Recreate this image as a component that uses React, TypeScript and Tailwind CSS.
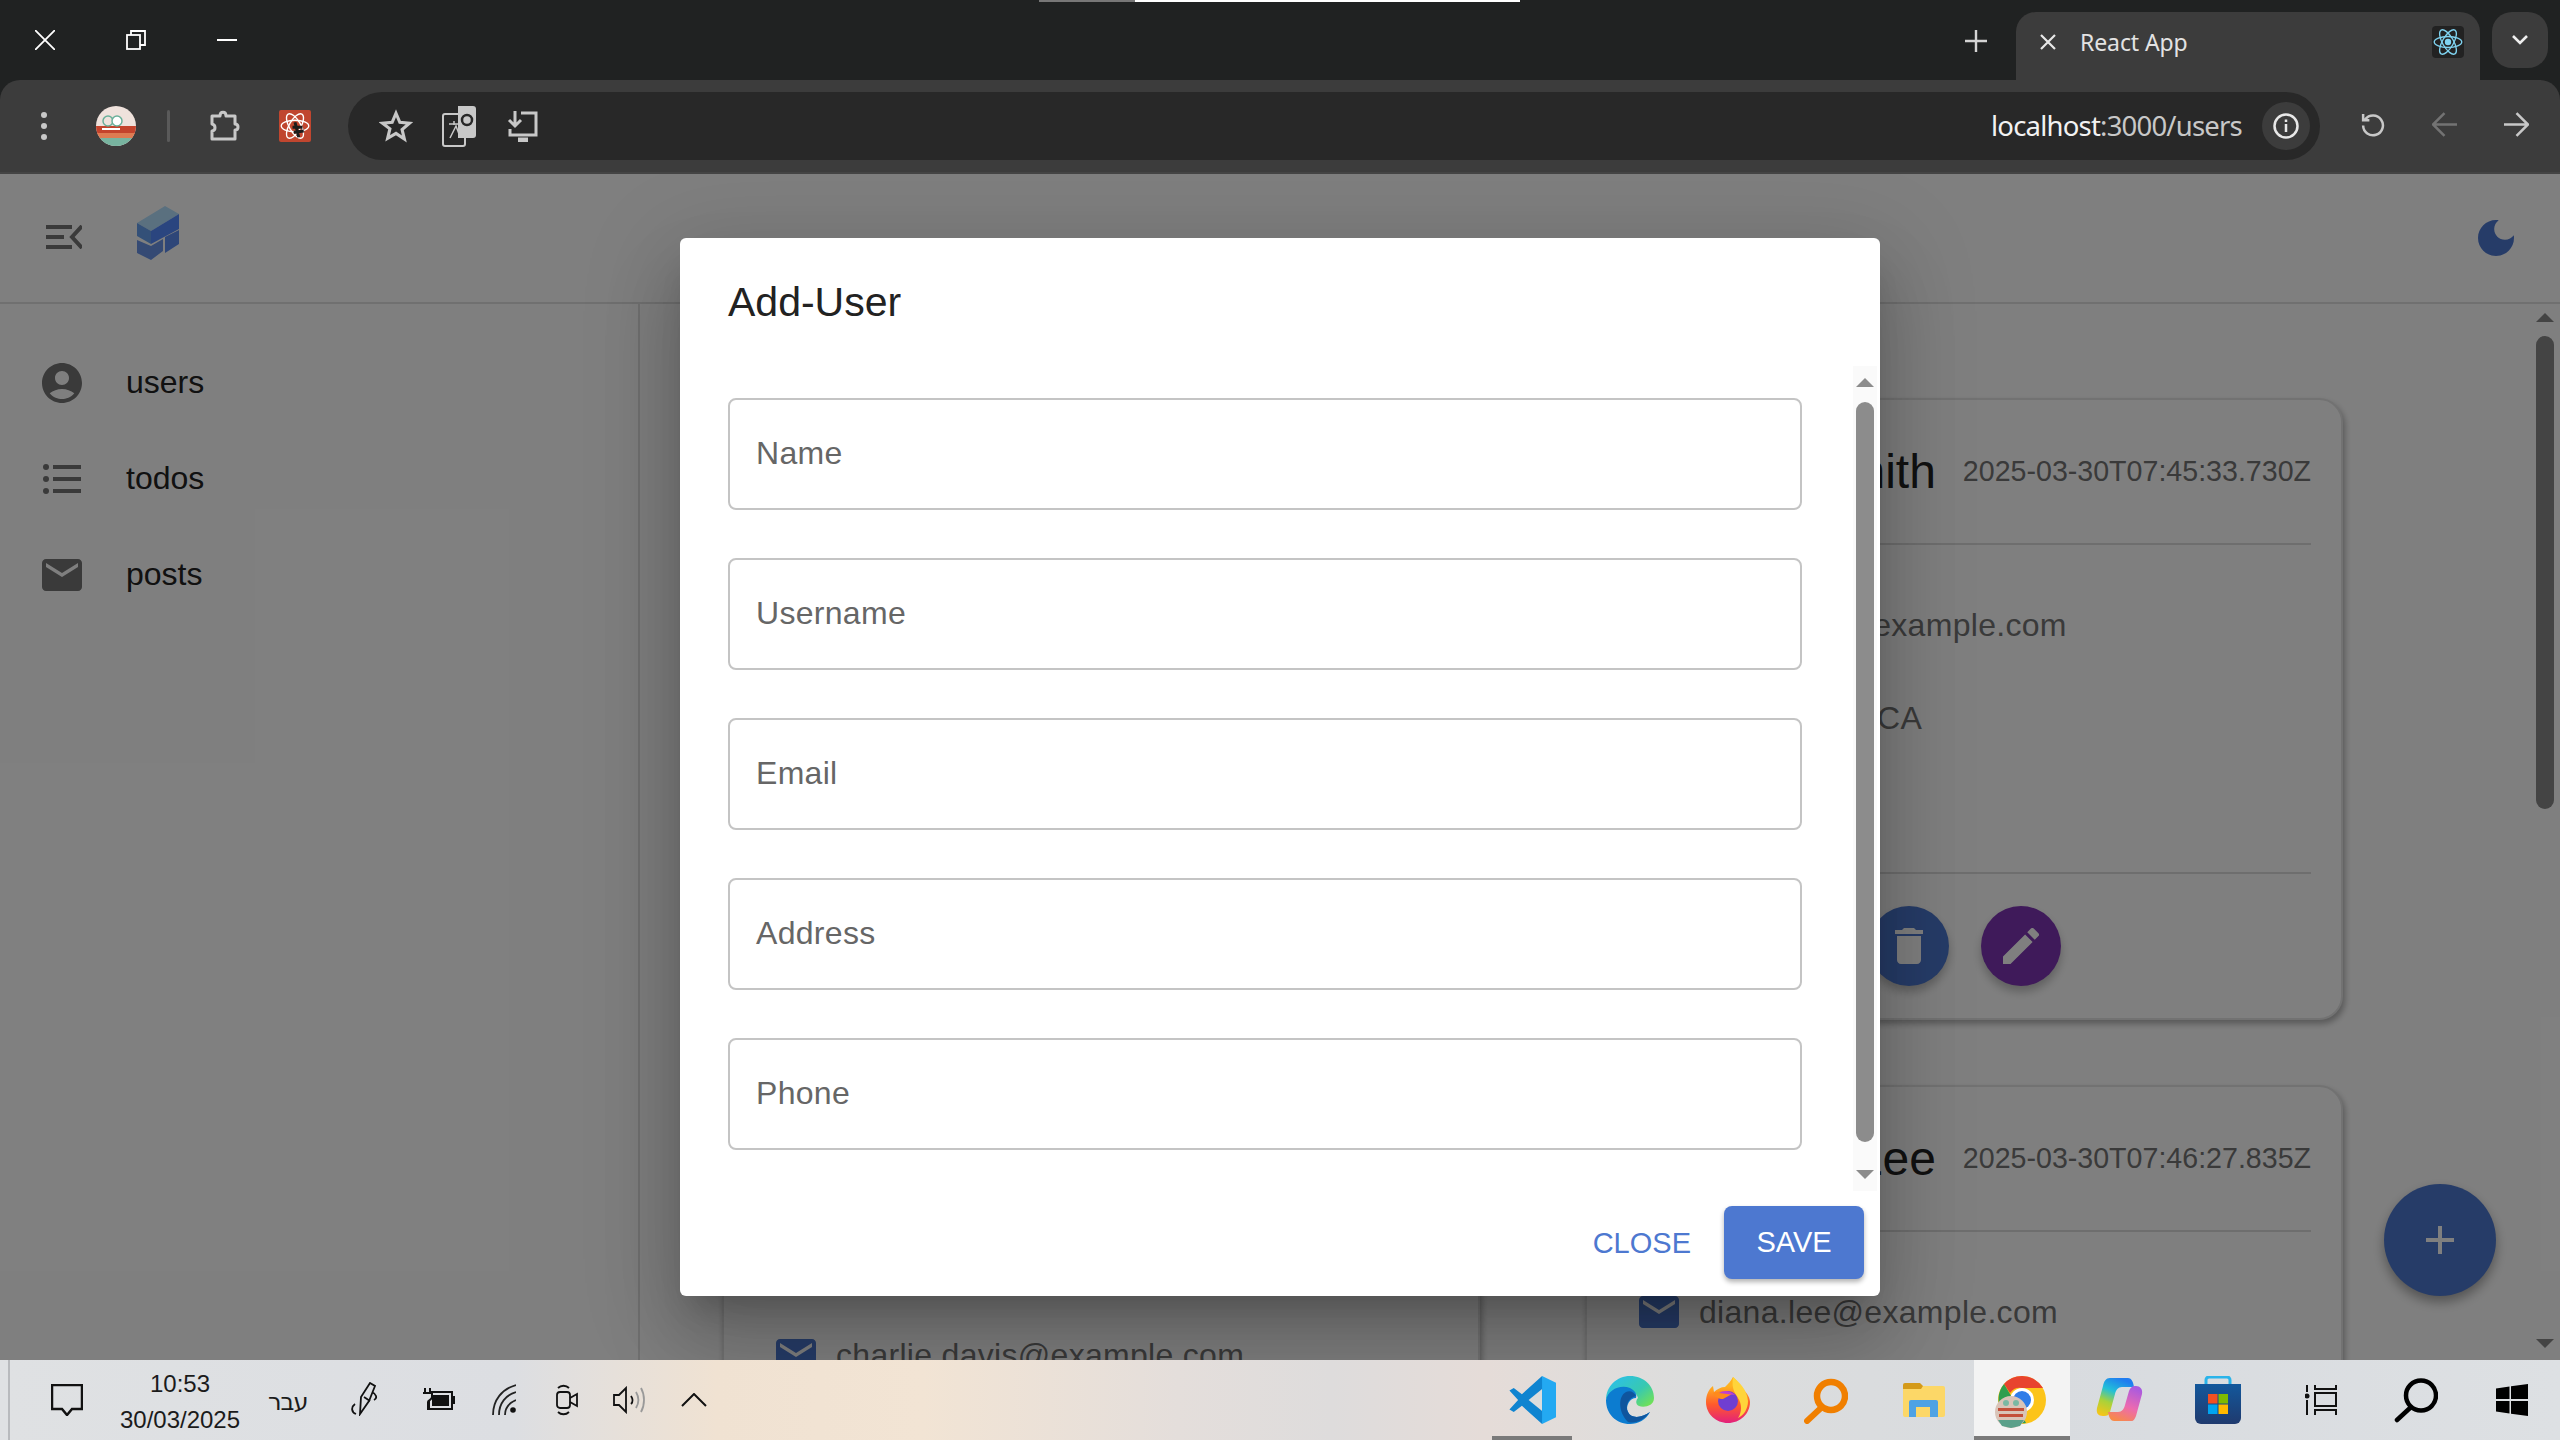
import { Fragment } from "react";

const font = "font-['Liberation_Sans',Arial,sans-serif]";

const fields = ["Name", "Username", "Email", "Address", "Phone"];

const MailIcon = ({ className }: { className: string }) => (
  <svg viewBox="2 4 20 16" className={className} fill="currentColor" preserveAspectRatio="none">
    <path d="M20 4H4c-1.100 0-2 .9-2 2v12c0 1.100.9 2 2 2h16c1.100 0 2-.9 2-2V6c0-1.100-.9-2-2-2zm0 4l-8 5-8-5V6l8 5 8-5v2z" />
  </svg>
);

const TabBar = () => (
  <div className="h-[80px] shrink-0 bg-[#202222] relative flex items-center text-white">
    <div className="absolute top-0 left-[1039px] h-[2px] w-[481px] flex">
      <div className="w-[96px] bg-[#777]" />
      <div className="flex-1 bg-white" />
    </div>
    <svg viewBox="0 0 20 20" className="w-[20px] h-[20px] ml-[35px] mr-[71px]" stroke="#fff" strokeWidth="1.8" fill="none">
      <path d="M0 0L20 20M20 0L0 20" />
    </svg>
    <svg viewBox="0 0 20 20" className="w-[20px] h-[20px] mr-[71px]" stroke="#fff" strokeWidth="1.8" fill="none">
      <rect x="1" y="5" width="13" height="14" />
      <path d="M5 5V1h14v14h-5" />
    </svg>
    <div className="w-[20px] h-[2px] bg-white" />
    <svg viewBox="0 0 20 20" className="w-[22px] h-[22px] ml-auto mr-[29px] mt-[1px]" stroke="#d4d4d4" strokeWidth="2.2" fill="none">
      <path d="M10 0V20M0 10H20" />
    </svg>
    <div className="w-[464px] h-[68px] self-end bg-[#3c3c3c] rounded-t-[20px] flex items-center pl-[24px] pr-[16px] mr-[12px]">
      <svg viewBox="0 0 16 16" className="w-[16px] h-[16px] mb-[8px]" stroke="#e8e8e8" strokeWidth="2.2" fill="none">
        <path d="M1 1L15 15M15 1L1 15" />
      </svg>
      <span className="ml-[24px] mb-[8px] text-[#e3e3e3] text-[23px] font-['Noto_Sans',sans-serif] tracking-[-0.1px]">React App</span>
      <div className="ml-auto mb-[8px] w-[32px] h-[32px] rounded-[4px] bg-[#222] flex items-center justify-center">
        <svg viewBox="-12 -12 24 24" className="w-[30px] h-[30px]" stroke="#7fd3f0" strokeWidth="1.1" fill="none">
          <circle r="2" fill="#7fd3f0" />
          <ellipse rx="11" ry="4.4" />
          <ellipse rx="11" ry="4.4" transform="rotate(60)" />
          <ellipse rx="11" ry="4.4" transform="rotate(120)" />
        </svg>
      </div>
    </div>
    <div className="w-[56px] h-[56px] mr-[12px] self-start mt-[12px] rounded-[20px] bg-[#3c3c3c] flex items-center justify-center">
      <svg viewBox="0 0 16 10" className="w-[16px] h-[10px]" stroke="#eee" strokeWidth="2.6" fill="none">
        <path d="M1 1L8 8L15 1" />
      </svg>
    </div>
  </div>
);

const Toolbar = () => (
  <div className="h-[94px] shrink-0 bg-[#3c3c3c] rounded-t-[20px] border-b-2 border-[#444] flex items-center relative">
    <div className="w-[6px] ml-[41px] flex flex-col gap-[5px]">
      <div className="w-[6px] h-[6px] rounded-full bg-[#c8c8c8]" />
      <div className="w-[6px] h-[6px] rounded-full bg-[#c8c8c8]" />
      <div className="w-[6px] h-[6px] rounded-full bg-[#c8c8c8]" />
    </div>
    <svg viewBox="0 0 40 40" className="w-[40px] h-[40px] ml-[49px]">
      <clipPath id="av"><circle cx="20" cy="20" r="20" /></clipPath>
      <g clipPath="url(#av)">
        <rect width="40" height="40" fill="#efe2dc" />
        <rect y="20" width="40" height="8" fill="#c4432c" />
        <rect y="27" width="40" height="6" fill="#de7b52" />
        <rect y="32" width="40" height="8" fill="#78b4a0" />
        <circle cx="12" cy="15" r="5" fill="none" stroke="#6ab09a" strokeWidth="1.5" />
        <circle cx="21" cy="15" r="5" fill="#fff" stroke="#6ab09a" strokeWidth="1.5" />
        <rect x="6" y="22" width="18" height="2" fill="#fff" />
      </g>
    </svg>
    <div className="w-[3px] h-[32px] ml-[31px] rounded bg-[#5a5a5a]" />
    <svg viewBox="0 0 32 32" className="w-[32px] h-[32px] ml-[39px]" stroke="#c8c8c8" strokeWidth="3" fill="none" strokeLinejoin="round">
      <path d="M3 6h8c0-5 6-5 6 0h9v8c4 0 4 6 0 6v9H3v-8c4-.5 4-6 0-7z" />
    </svg>
    <div className="w-[32px] h-[32px] ml-[38px] rounded-[2px] bg-[#c0462f] flex items-center justify-center">
      <svg viewBox="-12 -12 24 24" className="w-[30px] h-[30px]" stroke="#fff" strokeWidth="1.1" fill="none">
        <ellipse rx="11" ry="4.6" />
        <ellipse rx="11" ry="4.6" transform="rotate(60)" />
        <ellipse rx="11" ry="4.6" transform="rotate(120)" />
        <path d="M0-3L3 9M-2 1L6 1M-1 5L7 4" stroke="#1b1b1b" strokeWidth="2.4" />
      </svg>
    </div>
    <div className="absolute left-[348px] top-[12px] w-[1972px] h-[68px] rounded-full bg-[#282828] flex items-center">
      <svg viewBox="0 0 24 24" className="w-[34px] h-[34px] ml-[31px]" stroke="#c8c8c8" strokeWidth="2.2" fill="none" strokeLinejoin="miter">
        <path d="M12 3l2.700 6.400 6.800.6-5.200 4.500 1.600 6.700L12 17.200l-5.900 3.500 1.600-6.700L2.500 10l6.800-.6z" />
      </svg>
      <svg viewBox="0 0 34 44" className="w-[34px] h-[44px] ml-[29px]">
        <rect x="1" y="10" width="22" height="32" rx="2" fill="none" stroke="#c8c8c8" strokeWidth="2" />
        <path d="M16 2h15a3 3 0 0 1 3 3v26a3 3 0 0 1-3 3H16z" fill="#c8c8c8" />
        <circle cx="25" cy="16" r="5" fill="none" stroke="#282828" strokeWidth="2.5" />
        <path d="M7 20h11M12 17v4M8 34l6-12 3 8" fill="none" stroke="#c8c8c8" strokeWidth="1.5" />
      </svg>
      <svg viewBox="0 0 32 32" className="w-[32px] h-[32px] ml-[31px]" stroke="#c8c8c8" strokeWidth="3" fill="none">
        <path d="M14 3h15v22H3v-6" />
        <path d="M8 1v13M2 10l6 6 6-6" />
        <path d="M11 30h10" strokeWidth="5" />
      </svg>
      <div className="ml-auto mr-[10px] flex items-center gap-[20px]">
        <span className="text-[#f2f2f2] text-[27.5px] tracking-[-0.8px] font-['Noto_Sans',sans-serif]">
          localhost<span className="text-[#c8c8c8]">:3000/users</span>
        </span>
        <div className="w-[48px] h-[48px] rounded-full bg-[#3c3c3c] flex items-center justify-center">
          <svg viewBox="0 0 26 26" className="w-[26px] h-[26px]" stroke="#e8e8e8" strokeWidth="2.5" fill="none">
            <circle cx="13" cy="13" r="11.5" />
            <path d="M13 11v8M13 6.500v2.500" />
          </svg>
        </div>
      </div>
    </div>
    <svg viewBox="0 0 24 24" className="absolute left-[2360px] top-[32px] w-[25px] h-[25px]" stroke="#c8c8c8" strokeWidth="2.4" fill="none">
      <path d="M5 7a9.500 9.500 0 1 1-2 6M3 2v6h6" />
    </svg>
    <svg viewBox="0 0 24 24" className="absolute left-[2432px] top-[32px] w-[25px] h-[25px]" stroke="#737373" strokeWidth="2.4" fill="none">
      <path d="M24 12H2M12 1L1 12l11 11" />
    </svg>
    <svg viewBox="0 0 24 24" className="absolute left-[2504px] top-[32px] w-[25px] h-[25px]" stroke="#c8c8c8" strokeWidth="2.4" fill="none">
      <path d="M0 12h22M12 1l11 11-11 11" />
    </svg>
  </div>
);

const Sidebar = () => (
  <aside className="w-[640px] shrink-0 border-r-2 border-[#e0e0e0] pt-[31px] text-[#222]">
    {["users", "todos", "posts"].map((label) => (
      <div key={label} className="h-[96px] flex items-center pl-[42px]">
        <div className="w-[40px] h-[40px] flex items-center justify-center text-[#757575]">
          {label === "users" && (
            <svg viewBox="2 2 20 20" className="w-[40px] h-[40px]" fill="currentColor">
              <path d="M12 2C6.480 2 2 6.480 2 12s4.480 10 10 10 10-4.480 10-10S17.520 2 12 2zm0 4c1.930 0 3.500 1.570 3.500 3.500S13.930 13 12 13s-3.500-1.570-3.500-3.500S10.070 6 12 6zm0 14c-2.030 0-4.430-.820-6.140-2.880C7.550 15.800 9.680 15 12 15s4.450.8 6.140 2.120C16.430 19.180 14.030 20 12 20z" />
            </svg>
          )}
          {label === "todos" && (
            <svg viewBox="0 0 38 30" className="w-[38px] h-[30px]" fill="currentColor">
              <circle cx="3" cy="3" r="3" />
              <circle cx="3" cy="15" r="3" />
              <circle cx="3" cy="27" r="3" />
              <rect x="10" y="1" width="28" height="4" />
              <rect x="10" y="13" width="28" height="4" />
              <rect x="10" y="25" width="28" height="4" />
            </svg>
          )}
          {label === "posts" && <MailIcon className="w-[40px] h-[32px]" />}
        </div>
        <span className="ml-[44px] mb-[3px] text-[32px]">{label}</span>
      </div>
    ))}
  </aside>
);

const Fab = ({ color, children }: { color: string; children: React.ReactNode }) => (
  <div className={`w-[80px] h-[80px] rounded-full ${color} text-white flex items-center justify-center shadow-[0_6px_10px_rgba(0,0,0,0.25)]`}>
    {children}
  </div>
);

const Card = ({ name, date, email, city }: { name: string; date: string; email: string; city: string }) => (
  <div className="h-[622px] rounded-[24px] bg-white border-2 border-[#e4e4e4] shadow-[2px_4px_6px_rgba(0,0,0,0.3)] px-[30px] flex flex-col shrink-0">
    <div className="h-[145px] shrink-0 flex items-center justify-end gap-[27px] border-b-2 border-[#dcdcdc]">
      <span className="text-[48px] text-[#222] whitespace-nowrap">{name}</span>
      <span className="text-[28.6px] text-[#757575] whitespace-nowrap">{date}</span>
    </div>
    <div className="h-[329px] shrink-0 border-b-2 border-[#dcdcdc] pt-[40px] text-[32px] tracking-[0.3px] text-[#757575]">
      <div className="flex items-center h-[80px]">
        <MailIcon className="w-[40px] h-[32px] ml-[22px] text-[#4d78d0]" />
        <span className="ml-[20px]">{email}</span>
      </div>
      <div className="flex items-center h-[106px] pl-[64px]">{city}</div>
    </div>
    <div className="flex gap-[32px] pt-[32px] pl-[252px]">
      <Fab color="bg-[#4d78d0]">
        <svg viewBox="5 3 14 18" className="w-[28px] h-[36px]" fill="currentColor">
          <path d="M6 19c0 1.100.9 2 2 2h8c1.100 0 2-.9 2-2V7H6v12zM19 4h-3.500l-1-1h-5l-1 1H5v2h14V4z" />
        </svg>
      </Fab>
      <Fab color="bg-[#7e35b4]">
        <svg viewBox="3 3 18 18" className="w-[36px] h-[36px]" fill="currentColor">
          <path d="M3 17.250V21h3.750L17.810 9.940l-3.750-3.750L3 17.250zM20.710 7.040a1 1 0 0 0 0-1.410l-2.340-2.340a1 1 0 0 0-1.410 0l-1.830 1.830 3.750 3.750 1.830-1.830z" />
        </svg>
      </Fab>
    </div>
  </div>
);

const Dialog = () => (
  <div className={`w-[1200px] h-[1058px] bg-white rounded-[6px] shadow-[0_22px_30px_-14px_rgba(0,0,0,0.2),0_48px_76px_6px_rgba(0,0,0,0.14),0_18px_92px_16px_rgba(0,0,0,0.12)] flex flex-col ${font}`}>
    <h2 className="h-[128px] shrink-0 pl-[48px] pt-[32px] text-[41px] leading-[64px] text-[#222]">Add-User</h2>
    <div className="flex-1 flex relative pl-[48px]">
      <div className="w-[1074px] pt-[32px] flex flex-col gap-[48px]">
        {fields.map((field) => (
          <div key={field} className="h-[112px] rounded-[8px] border-2 border-[#c4c4c4] flex items-center pl-[26px] pb-[2px] text-[32px] tracking-[0.3px] text-[#666]">
            {field}
          </div>
        ))}
      </div>
      <div className="absolute left-[1173px] top-0 w-[24px] h-[825px] bg-[#fafafa] flex flex-col items-center">
        <div className="mt-[12px] border-x-[9px] border-x-transparent border-b-[9px] border-b-[#8c8c8c]" />
        <div className="mt-[15px] w-[18px] h-[740px] rounded-full bg-[#8c8c8c]" />
        <div className="mt-[28px] border-x-[9px] border-x-transparent border-t-[9px] border-t-[#8c8c8c]" />
      </div>
    </div>
    <div className="h-[106px] shrink-0 flex items-start justify-end pr-[16px] pt-[16px]">
      <span className="mt-[20px] mr-[33px] text-[#4d78d0] text-[29px] leading-[34px]">CLOSE</span>
      <div className="w-[140px] h-[73px] rounded-[8px] bg-[#4d78d0] text-white text-[29px] flex items-center justify-center shadow-[0_3px_5px_rgba(0,0,0,0.3)]">SAVE</div>
    </div>
  </div>
);

const AppArea = () => (
  <div className={`flex-1 relative bg-white overflow-hidden flex flex-col ${font}`}>
    <header className="h-[130px] shrink-0 border-b-2 border-[#e0e0e0] flex items-center pl-[46px] pr-[46px]">
      <svg viewBox="0 0 36 24" className="w-[36px] h-[24px] mb-[2px]" fill="#757575">
        <rect width="26" height="4" />
        <rect y="10" width="18" height="4" />
        <rect y="20" width="26" height="4" />
        <path d="M36 1L26 12l10 11" fill="none" stroke="#757575" strokeWidth="4" />
      </svg>
      <svg viewBox="0 0 42 54" className="w-[42px] h-[54px] ml-[55px] mb-[10px]">
        <path d="M28 0L42 8 14 25 0 17z" fill="#b4e0ff" />
        <path d="M14 25L42 8v15L14 38z" fill="#548aff" />
        <path d="M0 17l14 8v13L0 30z" fill="#66a0f0" />
        <path d="M0 34l14 6 12-7v12L14 54 0 47z" fill="#6a94e8" />
        <path d="M28 31l14-7v14l-14 9z" fill="#5c8cf0" />
      </svg>
      <svg viewBox="3 3 18 18" className="w-[36px] h-[36px] ml-auto" fill="#4d78d0">
        <path d="M12 3c-4.970 0-9 4.030-9 9s4.030 9 9 9 9-4.030 9-9c0-.46-.04-.92-.1-1.360-.98 1.370-2.580 2.260-4.400 2.260-2.980 0-5.400-2.420-5.400-5.400 0-1.810.89-3.420 2.260-4.400-.44-.06-.9-.1-1.360-.1z" />
      </svg>
    </header>
    <div className="flex-1 flex min-h-0">
      <Sidebar />
      <main className="flex-1 flex gap-[105px] pl-[82px] pt-[94px] min-w-0">
        <div className="w-[758px] shrink-0 flex flex-col gap-[64px]">
          <Card name="Alice Johnson" date="2025-03-30T07:44:12.514Z" email="alice.johnson@example.com" city="New York, NY" />
          <div className="h-[622px] rounded-[24px] bg-white border-2 border-[#e4e4e4] shadow-[2px_4px_6px_rgba(0,0,0,0.3)] px-[30px] flex flex-col shrink-0">
            <div className="h-[144px] shrink-0 border-b-2 border-[#dcdcdc]" />
            <div className="pt-[101px] flex items-center text-[32px] tracking-[0.3px] text-[#757575]">
              <MailIcon className="w-[40px] h-[32px] ml-[22px] text-[#4d78d0]" />
              <span className="ml-[20px]">charlie.davis@example.com</span>
            </div>
          </div>
        </div>
        <div className="w-[758px] shrink-0 flex flex-col gap-[65px]">
          <Card name="Bob Smith" date="2025-03-30T07:45:33.730Z" email="bob.smith@example.com" city="Los Angeles, CA" />
          <Card name="Diana Lee" date="2025-03-30T07:46:27.835Z" email="diana.lee@example.com" city="Seattle, WA" />
        </div>
      </main>
    </div>
    <div className="absolute right-[64px] bottom-[64px] w-[112px] h-[112px] rounded-full bg-[#4d78d0] shadow-[0_6px_12px_rgba(0,0,0,0.35)] flex items-center justify-center">
      <svg viewBox="0 0 28 28" className="w-[28px] h-[28px]" stroke="#fff" strokeWidth="4" fill="none">
        <path d="M14 0V28M0 14H28" />
      </svg>
    </div>
    <div className="absolute right-0 top-[130px] bottom-0 w-[30px] bg-white flex flex-col items-center">
      <div className="mt-[9px] border-x-[9px] border-x-transparent border-b-[9px] border-b-[#888]" />
      <div className="mt-[14px] w-[18px] h-[473px] rounded-full bg-[#888]" />
      <div className="mt-auto mb-[12px] border-x-[9px] border-x-transparent border-t-[9px] border-t-[#888]" />
    </div>
    <div className="absolute inset-0 bg-black/50 flex items-center justify-center">
      <Dialog />
    </div>
  </div>
);

const Taskbar = () => (
  <footer className={`h-[80px] shrink-0 flex items-center relative text-[#1b1b1b] bg-[linear-gradient(90deg,#dfe1e3_0%,#dcdee2_20%,#f0e2d2_28%,#f2e4d4_36%,#e4dedb_46%,#dedcdc_52%,#e5dcd8_58%,#dcdddd_66%,#d8dbdf_80%,#dde0e3_100%)] ${font}`}>
    <div className="absolute left-[8px] top-0 bottom-0 w-[2px] bg-[#b8babd]" />
    <svg viewBox="0 0 32 32" className="absolute left-[51px] top-[24px] w-[32px] h-[32px]" stroke="#111" strokeWidth="2.5" fill="none">
      <path d="M1 1h30v24H21l-5 6-5-6H1z" />
    </svg>
    <div className="absolute left-[118px] top-[6px] w-[124px] flex flex-col items-center text-[24px] leading-[36px]">
      <span>10:53</span>
      <span>30/03/2025</span>
    </div>
    <span dir="rtl" className="absolute left-[268px] top-[24px] text-[24px] font-['DejaVu_Sans',sans-serif] tracking-[-1px]">עבר</span>
    <svg viewBox="0 0 32 34" className="absolute left-[350px] top-[22px] w-[32px] h-[34px]" stroke="#111" strokeWidth="1.8" fill="none">
      <path d="M10 32L11 15 20 1l5 3-6 15zM22 10c4 2 6 6 2 8M5 22c-4 3-4 8 1 10" />
      <path d="M14 15l6 4" />
    </svg>
    <svg viewBox="0 0 33 22" className="absolute left-[422px] top-[28px] w-[33px] h-[22px]" stroke="#111" strokeWidth="2" fill="none">
      <path d="M7 4h23v17H7V12" />
      <rect x="10" y="7" width="17" height="11" fill="#111" stroke="none" />
      <path d="M32 8v8" />
      <path d="M3 0v5M8 0v5" />
      <path d="M1 5h9v4c0 3-4 3-4 5v8" fill="#dfe1e3" />
    </svg>
    <svg viewBox="0 0 24 32" className="absolute left-[492px] top-[24px] w-[24px] h-[32px]" stroke="#222" strokeWidth="1.8" fill="none">
      <path d="M1 31C1 16 10 5 24 1M7 31C7 19 14 11 24 8M13 31c0-7 4-12 11-15" />
      <circle cx="21" cy="26" r="2.8" fill="#111" stroke="none" />
    </svg>
    <svg viewBox="0 0 22 32" className="absolute left-[556px] top-[24px] w-[22px] h-[32px]" stroke="#111" strokeWidth="1.8" fill="none">
      <rect x="1" y="8" width="13" height="16" rx="3" />
      <path d="M14 14l7-4v12l-7-4M2 4c3-3 8-3 11 0M2 28c3 3 8 3 11 0" />
    </svg>
    <svg viewBox="0 0 34 28" className="absolute left-[613px] top-[26px] w-[34px] h-[28px]" stroke="#111" strokeWidth="1.8" fill="none">
      <path d="M1 9h5l7-7v24l-7-7H1z" />
      <path d="M18 10c2 3 2 6 0 8" />
      <path d="M23 6c3 5 3 11 0 16M28 2c4 7 4 17 0 24" stroke="#999" />
    </svg>
    <svg viewBox="0 0 26 14" className="absolute left-[681px] top-[33px] w-[26px] h-[14px]" stroke="#111" strokeWidth="2" fill="none">
      <path d="M1 13L13 1l12 12" />
    </svg>

    <div className="absolute left-[1492px] bottom-0 w-[80px] h-[4px] bg-[#7a7a7a]" />
    <svg viewBox="0 0 100 100" className="absolute left-[1508px] top-[16px] w-[48px] h-[48px]">
      <path d="M71 0L29 38 12 25 3 30 21 50 3 70l9 5 17-13 42 38 4-12V12z" fill="#0f84d0" />
      <path d="M71 27L43 50l28 23z" fill="#dcdddd" />
      <path d="M71 0l29 14v72l-29 14z" fill="#23a9f2" />
    </svg>
    <svg viewBox="0 0 48 48" className="absolute left-[1606px] top-[16px] w-[48px] h-[48px]">
      <defs>
        <linearGradient id="edg" x1="0" y1="0" x2="1" y2="0.8">
          <stop offset="0.15" stopColor="#2cc0e4" />
          <stop offset="0.65" stopColor="#38c9b0" />
          <stop offset="1" stopColor="#6fe05a" />
        </linearGradient>
      </defs>
      <path d="M0 24C0 10 11 0 24 0c14 0 24 10 24 22 0 8-10 10-15 8-4-2-3-6-1-8-2-8-14-12-24-6-4 2-7 5-8 8z" fill="url(#edg)" />
      <path d="M0 24c2-10 14-16 24-12 6 3 7 7 6 10-6 0-11 8-8 14 3 7 14 6 22 0-4 8-12 12-20 12C10 48 0 38 0 24z" fill="#0c7cd0" />
      <path d="M20 16c-8 4-8 20 2 30 8 2 16-2 22-10-8 6-19 7-22 0-3-6 0-14 8-16-2-4-6-6-10-4z" fill="#0f559e" />
    </svg>
    <svg viewBox="0 0 44 46" className="absolute left-[1706px] top-[17px] w-[44px] h-[46px]">
      <defs>
        <linearGradient id="ffx" x1="0" y1="0" x2="0" y2="1">
          <stop offset="0.2" stopColor="#ffb21f" />
          <stop offset="0.6" stopColor="#ff5a2c" />
          <stop offset="1" stopColor="#e3207c" />
        </linearGradient>
      </defs>
      <path d="M27 0c4 4 7 7 9 12 6 4 8 10 8 13 0 12-10 21-22 21S0 37 0 25c0-6 2-12 7-16l1 6c3-3 7-5 11-5 3-3 6-6 8-10z" fill="url(#ffx)" />
      <path d="M27 0c6 5 14 12 15 24 0 8-4 14-10 17 4-6 4-14 0-20-2-4-7-8-5-21z" fill="#ffd43a" />
      <circle cx="22" cy="24" r="10" fill="#6f3ed1" />
      <path d="M7 16c5-2 14-3 19 1l-9 5c-4 0-8-2-10-6z" fill="#ff8a1c" />
      <path d="M13 16c4-3 11-3 16 2l-8-1z" fill="#c040d0" />
    </svg>
    <svg viewBox="0 0 44 48" className="absolute left-[1804px] top-[16px] w-[44px] h-[48px]" fill="none" stroke="#f07f00">
      <circle cx="27" cy="20" r="14" strokeWidth="6.5" />
      <path d="M18 31L3 45" strokeWidth="6" strokeLinecap="round" />
    </svg>
    <svg viewBox="0 0 42 34" className="absolute left-[1903px] top-[23px] w-[42px] h-[34px]">
      <path d="M0 2a2 2 0 0 1 2-2h15l3 3v4H0z" fill="#d49a1a" />
      <path d="M0 6h18l2-3h20a2 2 0 0 1 2 2v27a2 2 0 0 1-2 2H2a2 2 0 0 1-2-2z" fill="#fcd767" />
      <path d="M6 19a2 2 0 0 1 2-2h25a2 2 0 0 1 2 2v15H6z" fill="#4ea2e4" />
      <rect x="13" y="24" width="14" height="10" fill="#fcd767" />
    </svg>
    <div className="absolute left-[1974px] top-0 bottom-0 w-[96px] bg-[#f3f3f3]">
      <div className="absolute bottom-0 inset-x-0 h-[4px] bg-[#7a7a7a]" />
      <svg viewBox="0 0 48 48" className="absolute left-[24px] top-[16px] w-[48px] h-[48px] overflow-visible">
        <circle cx="24" cy="24" r="24" fill="#fcc419" />
        <path d="M24 0A24 24 0 0 1 45 12H24a12 12 0 0 0-12 5L6 8A24 24 0 0 1 24 0z" fill="#e8432e" />
        <path d="M6 8l12 20 10 19A24 24 0 0 1 6 8z" fill="#2f9e4f" />
        <circle cx="24" cy="24" r="12" fill="#fff" />
        <circle cx="24" cy="24" r="9" fill="#2f7de8" />
        <circle cx="13" cy="36" r="16" fill="#d9c4b8" />
        <rect x="0" y="32" width="26" height="3" fill="#c4503a" />
        <rect x="1" y="38" width="24" height="3" fill="#c4503a" />
        <path d="M0 44h26l-4 6-9 2-9-2z" fill="#5aa08a" />
        <circle cx="8" cy="27" r="3" fill="#7ab8a3" />
        <circle cx="18" cy="27" r="3" fill="#7ab8a3" />
      </svg>
    </div>
    <svg viewBox="0 0 48 44" className="absolute left-[2096px] top-[17px] w-[48px] h-[44px]">
      <defs>
        <linearGradient id="cop1" x1="0.6" y1="0" x2="0.2" y2="1">
          <stop offset="0" stopColor="#1f7cf0" />
          <stop offset="0.35" stopColor="#22c0d8" />
          <stop offset="0.65" stopColor="#a8d23a" />
          <stop offset="1" stopColor="#f5c518" />
        </linearGradient>
        <linearGradient id="cop2" x1="0.7" y1="0" x2="0.3" y2="1">
          <stop offset="0" stopColor="#a85ae0" />
          <stop offset="0.55" stopColor="#ec6ab0" />
          <stop offset="1" stopColor="#f78a4a" />
        </linearGradient>
      </defs>
      <path d="M14 1h18c3 0 5 3 6 9H26c-4 0-6 3-7 7l-5 18c-1 3-3 4-6 4H7C2 39 0 36 1 31L7 9c1-5 3-8 7-8z" fill="url(#cop1)" />
      <path d="M36 44H18c-3 0-5-3-6-9h10c4 0 6-3 7-7l4-14c1-3 3-5 6-5h1c4 0 7 3 6 8l-6 22c-1 3-3 5-4 5z" fill="url(#cop2)" />
    </svg>
    <svg viewBox="0 0 46 48" className="absolute left-[2195px] top-[16px] w-[46px] h-[48px]">
      <defs>
        <linearGradient id="bag" x1="0" y1="0" x2="0" y2="1">
          <stop offset="0" stopColor="#13589c" />
          <stop offset="1" stopColor="#1f3a6e" />
        </linearGradient>
      </defs>
      <path d="M11 10V4a3 3 0 0 1 3-3h18a3 3 0 0 1 3 3v6" fill="none" stroke="#2ab4ea" strokeWidth="3" />
      <path d="M0 8h46v34a6 6 0 0 1-6 6H6a6 6 0 0 1-6-6z" fill="url(#bag)" />
      <rect x="13" y="18" width="9.500" height="9.500" fill="#f25022" />
      <rect x="23.500" y="18" width="9.500" height="9.500" fill="#7fba00" />
      <rect x="13" y="28.500" width="9.500" height="9.500" fill="#00a4ef" />
      <rect x="23.500" y="28.500" width="9.500" height="9.500" fill="#ffb900" />
    </svg>
    <svg viewBox="0 0 32 30" className="absolute left-[2305px] top-[25px] w-[32px] h-[30px]" stroke="#111" strokeWidth="2" fill="none">
      <path d="M10 0v4h21V0M10 30v-5h21v5M10 8h21v13H10z" />
      <path d="M2 0v7M2 15v15" />
      <circle cx="2" cy="11" r="2.500" fill="#111" stroke="none" />
    </svg>
    <svg viewBox="0 0 44 48" className="absolute left-[2394px] top-[16px] w-[44px] h-[48px]" fill="none" stroke="#000">
      <circle cx="27" cy="19.500" r="15" strokeWidth="4.500" />
      <path d="M16 32L3 44" strokeWidth="4.500" strokeLinecap="round" />
    </svg>
    <svg viewBox="0 0 32 32" className="absolute left-[2496px] top-[24px] w-[32px] h-[32px]" fill="#000">
      <path d="M0 4.500L13.500 2.500V15H0zM15 2.300L32 0V15H15zM0 17h13.500v12.500L0 27.500zM15 17h17v15l-17-2.300z" />
    </svg>
  </footer>
);

export default function App() {
  return (
    <Fragment>
      <div className="w-[2560px] h-[1440px] flex flex-col overflow-hidden">
        <TabBar />
        <div className="bg-[#202222] shrink-0">
          <Toolbar />
        </div>
        <AppArea />
        <Taskbar />
      </div>
    </Fragment>
  );
}
